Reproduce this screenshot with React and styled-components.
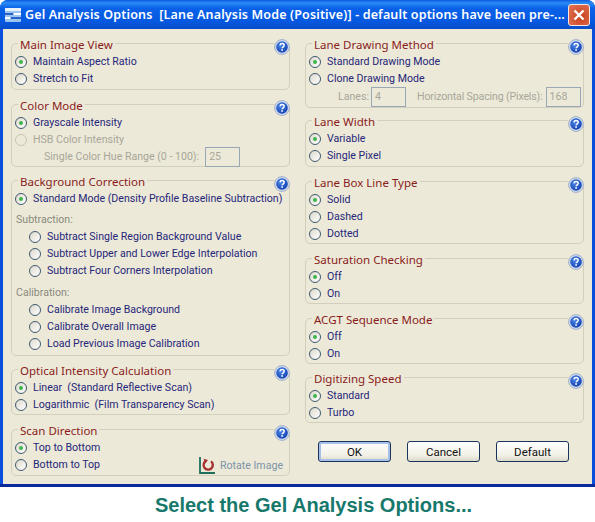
import styled, { createGlobalStyle } from 'styled-components'

const GlobalStyle = createGlobalStyle`
    html, body {
        margin: 0;
        padding: 0;
        background: #ffffff;
    }
`;

const Page = styled.div`
    width: 595px;
    height: 522px;
    overflow: hidden;
    font-family: "Noto Sans", Tahoma, sans-serif;
`;

const Window = styled.div`
    width: 595px;
    height: 487px;
    box-sizing: border-box;
    display: flex;
    flex-direction: column;
    background: #0a4fdc;
    border-radius: 8px 8px 0 0;
    border-bottom: 3px solid #0a2a9c;
`;

const TitleBar = styled.div`
    height: 29px;
    flex: none;
    display: flex;
    align-items: center;
    padding: 0 5px 0 5px;
    background: linear-gradient(180deg, #0a5be0 0%, #2b8cf5 10%, #0a62e8 28%, #0558e0 75%, #0a4cc8 100%);
    border-radius: 8px 8px 0 0;
`;

const TitleText = styled.div`
    flex: 1;
    margin-left: 4px;
    color: #ffffff;
    font-size: 12.5px;
    font-weight: 600;
    white-space: pre;
    letter-spacing: 0.15px;
`;

const CloseButton = styled.div`
    width: 20px;
    height: 20px;
    display: flex;
    align-items: center;
    justify-content: center;
    background: radial-gradient(circle at 60% 60%, #c8401c, #e2765a);
    border: 1px solid #f5e8e4;
    border-radius: 3px;
`;

const Body = styled.div`
    flex: 1;
    margin: 0 3px;
    padding: 14px 8px 0 8px;
    background: #ece9d8;
    display: grid;
    grid-template-columns: 279px 279px;
    column-gap: 15px;
    align-content: start;
`;

const Column = styled.div`
    display: flex;
    flex-direction: column;
`;

const Group = styled.section`
    position: relative;
    box-sizing: border-box;
    height: ${props => props.h}px;
    margin-bottom: ${props => props.gap}px;
    padding: 9px 0 0 3px;
    border: 1px solid #d3cfbd;
    border-radius: 5px;
`;

const Legend = styled.div`
    position: absolute;
    top: -7px;
    left: 6px;
    padding: 0 2px 0 2px;
    background: #ece9d8;
    color: #8a1c1c;
    font-size: 11.5px;
    line-height: 15px;
    white-space: nowrap;
`;

const HelpBadge = styled.div`
    position: absolute;
    top: -6.5px;
    right: -1px;
    width: 16px;
    height: 16px;
    background: #ece9d8;
    border-radius: 50%;
`;

const Row = styled.div`
    height: 17px;
    display: flex;
    align-items: center;
    padding-left: ${props => props.indent || 0}px;
`;

const RadioMark = styled.span`
    flex: none;
    width: 10px;
    height: 10px;
    display: flex;
    align-items: center;
    justify-content: center;
    border: 1px solid ${props => props.disabled ? '#c8c5b4' : '#3f5a70'};
    border-radius: 50%;
    background: ${props => props.disabled ? '#ece9d8' : 'linear-gradient(135deg, #dcd9cb, #ffffff)'};
    &::after {
        content: '';
        display: ${props => props.checked ? 'block' : 'none'};
        width: 4px;
        height: 4px;
        border-radius: 50%;
        background: #3db54a;
    }
`;

const RadioText = styled.span`
    margin-left: 6px;
    font-family: Roboto, "Noto Sans", sans-serif;
    font-size: 10.6px;
    color: ${props => props.disabled ? '#a8a698' : '#26267a'};
    white-space: pre;
`;

const SubHeading = styled.div`
    height: 17px;
    display: flex;
    align-items: center;
    padding-left: 1px;
    margin-top: ${props => props.top || 0}px;
    font-family: Roboto, "Noto Sans", sans-serif;
    font-size: 10.6px;
    color: #8a897c;
`;

const FieldRow = styled.div`
    height: 19px;
    display: flex;
    align-items: center;
    margin-top: ${props => props.top || 0}px;
    padding-left: ${props => props.indent}px;
`;

const FieldLabel = styled.span`
    font-family: Roboto, "Noto Sans", sans-serif;
    font-size: 10.6px;
    letter-spacing: ${props => props.tight ? '-0.15px' : '0'};
    color: #a8a698;
    white-space: pre;
    margin-left: ${props => props.left || 0}px;
`;

const FieldBox = styled.span`
    box-sizing: border-box;
    flex: none;
    width: ${props => props.w}px;
    height: 20px;
    margin-left: ${props => props.left}px;
    padding-left: 3px;
    display: flex;
    align-items: center;
    border: 1px solid #98a8b4;
    font-family: Roboto, "Noto Sans", sans-serif;
    font-size: 10.6px;
    color: #a8a698;
`;

const RotateLink = styled.div`
    position: absolute;
    right: 6px;
    bottom: 1px;
    display: flex;
    align-items: center;
    gap: 5px;
    color: #7d93a8;
    font-family: Roboto, "Noto Sans", sans-serif;
    font-size: 10.6px;
`;

const ButtonRow = styled.div`
    display: flex;
    gap: 16px;
    margin: 5px 0 0 13px;
`;

const Button = styled.div`
    box-sizing: border-box;
    width: 73px;
    height: 21px;
    display: flex;
    align-items: center;
    justify-content: center;
    font-family: Roboto, "Noto Sans", sans-serif;
    font-size: 11.5px;
    color: #111111;
    background: linear-gradient(180deg, #ffffff, #f2f0e6 70%, #dcd8c8);
    border: 1px solid #18345c;
    border-radius: 3px;
    box-shadow: ${props => props.primary ? 'inset 0 0 0 2px #a8c0e8' : 'none'};
`;

const Caption = styled.div`
    height: 35px;
    padding: 2px 0 0 32px;
    box-sizing: border-box;
    display: flex;
    align-items: center;
    justify-content: center;
    color: #17786c;
    font-family: "Liberation Sans", Arial, sans-serif;
    font-size: 20px;
    font-weight: 700;
`;

const HelpIcon = () => (
    <svg width="16" height="16" viewBox="0 0 16 16">
        <defs>
            <radialGradient id="helpFill" cx="40%" cy="35%" r="70%">
                <stop offset="0%" stopColor="#4a86e8" />
                <stop offset="100%" stopColor="#123fae" />
            </radialGradient>
        </defs>
        <circle cx="8" cy="8" r="7.4" fill="#d4deee" stroke="#8fa2c2" strokeWidth="0.8" />
        <circle cx="8" cy="8" r="5.8" fill="url(#helpFill)" />
        <path d="M5.9 6.3c.2-1.2 1.1-1.8 2.2-1.8 1.2 0 2.1.7 2.1 1.8 0 1.5-2 1.5-2 3" fill="none" stroke="#ffffff" strokeWidth="1.5" />
        <rect x="7.3" y="10.2" width="1.6" height="1.6" fill="#ffffff" />
    </svg>
);

const WindowIcon = () => (
    <svg width="16" height="16" viewBox="0 0 16 16">
        <rect x="0" y="1" width="16" height="14" rx="1" fill="#9cc4f0" />
        <rect x="0" y="1" width="16" height="3" fill="#e8f2fc" />
        <rect x="0" y="6" width="8" height="2" fill="#2a62c8" />
        <rect x="9" y="6" width="7" height="2" fill="#ffffff" />
        <rect x="0" y="10" width="5" height="2" fill="#ffffff" />
        <rect x="6" y="10" width="10" height="2" fill="#2a62c8" />
    </svg>
);

const CloseIcon = () => (
    <svg width="12" height="12" viewBox="0 0 12 12">
        <path d="M1.5 1.5L10.5 10.5M10.5 1.5L1.5 10.5" stroke="#ffffff" strokeWidth="2.4" />
    </svg>
);

const RotateIcon = () => (
    <svg width="16" height="17" viewBox="0 0 16 17">
        <path d="M1 0V16H16" fill="none" stroke="#1f6f5c" strokeWidth="1.8" />
        <path d="M7 4a4.6 4.6 0 1 0 5 .4" fill="none" stroke="#a83232" strokeWidth="2.4" />
        <path d="M4.6 1.8L9 3 6.2 6.4z" fill="#a83232" />
    </svg>
);

const Radio = ({ label, checked, disabled, indent }) => (
    <Row indent={indent}>
        <RadioMark checked={checked} disabled={disabled} />
        <RadioText disabled={disabled}>{label}</RadioText>
    </Row>
);

const OptionGroup = ({ title, h, gap, children }) => (
    <Group h={h} gap={gap}>
        <Legend>{title}</Legend>
        <HelpBadge><HelpIcon /></HelpBadge>
        {children}
    </Group>
);

const App = () => (
    <Page>
        <GlobalStyle />
        <Window>
            <TitleBar>
                <WindowIcon />
                <TitleText>{'Gel Analysis Options  [Lane Analysis Mode (Positive)] - default options have been pre-...'}</TitleText>
                <CloseButton><CloseIcon /></CloseButton>
            </TitleBar>
            <Body>
                <Column>
                    <OptionGroup title="Main Image View" h={47} gap={14}>
                        <Radio label="Maintain Aspect Ratio" checked />
                        <Radio label="Stretch to Fit" />
                    </OptionGroup>
                    <OptionGroup title="Color Mode" h={63} gap={13}>
                        <Radio label="Grayscale Intensity" checked />
                        <Radio label="HSB Color Intensity" disabled />
                        <FieldRow indent={29} top={-1}>
                            <FieldLabel>Single Color Hue Range (0 - 100):</FieldLabel>
                            <FieldBox w={35} left={6}>25</FieldBox>
                        </FieldRow>
                    </OptionGroup>
                    <OptionGroup title="Background Correction" h={176} gap={13}>
                        <Radio label="Standard Mode (Density Profile Baseline Subtraction)" checked />
                        <SubHeading top={4}>Subtraction:</SubHeading>
                        <Radio label="Subtract Single Region Background Value" indent={14} />
                        <Radio label="Subtract Upper and Lower Edge Interpolation" indent={14} />
                        <Radio label="Subtract Four Corners Interpolation" indent={14} />
                        <SubHeading top={5}>Calibration:</SubHeading>
                        <Radio label="Calibrate Image Background" indent={14} />
                        <Radio label="Calibrate Overall Image" indent={14} />
                        <Radio label="Load Previous Image Calibration" indent={14} />
                    </OptionGroup>
                    <OptionGroup title="Optical Intensity Calculation" h={46} gap={14}>
                        <Radio label="Linear  (Standard Reflective Scan)" checked />
                        <Radio label="Logarithmic  (Film Transparency Scan)" />
                    </OptionGroup>
                    <OptionGroup title="Scan Direction" h={47} gap={0}>
                        <Radio label="Top to Bottom" checked />
                        <Radio label="Bottom to Top" />
                        <RotateLink><RotateIcon />Rotate Image</RotateLink>
                    </OptionGroup>
                </Column>
                <Column>
                    <OptionGroup title="Lane Drawing Method" h={65} gap={12}>
                        <Radio label="Standard Drawing Mode" checked />
                        <Radio label="Clone Drawing Mode" />
                        <FieldRow indent={29}>
                            <FieldLabel>Lanes:</FieldLabel>
                            <FieldBox w={35} left={2}>4</FieldBox>
                            <FieldLabel left={11} tight>Horizontal Spacing (Pixels):</FieldLabel>
                            <FieldBox w={35} left={3}>168</FieldBox>
                        </FieldRow>
                    </OptionGroup>
                    <OptionGroup title="Lane Width" h={47} gap={14}>
                        <Radio label="Variable" checked />
                        <Radio label="Single Pixel" />
                    </OptionGroup>
                    <OptionGroup title="Lane Box Line Type" h={63} gap={14}>
                        <Radio label="Solid" checked />
                        <Radio label="Dashed" />
                        <Radio label="Dotted" />
                    </OptionGroup>
                    <OptionGroup title="Saturation Checking" h={46} gap={14}>
                        <Radio label="Off" checked />
                        <Radio label="On" />
                    </OptionGroup>
                    <OptionGroup title="ACGT Sequence Mode" h={46} gap={13}>
                        <Radio label="Off" checked />
                        <Radio label="On" />
                    </OptionGroup>
                    <OptionGroup title="Digitizing Speed" h={46} gap={13}>
                        <Radio label="Standard" checked />
                        <Radio label="Turbo" />
                    </OptionGroup>
                    <ButtonRow>
                        <Button primary>OK</Button>
                        <Button>Cancel</Button>
                        <Button>Default</Button>
                    </ButtonRow>
                </Column>
            </Body>
        </Window>
        <Caption>Select the Gel Analysis Options...</Caption>
    </Page>
);

export default App;
